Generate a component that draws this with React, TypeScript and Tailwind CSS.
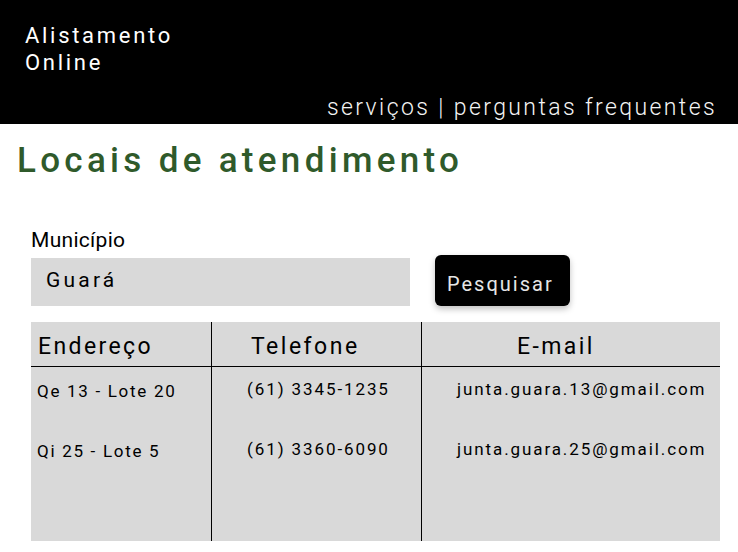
import React from 'react';

const rows = [
  { address: 'Qe 13 - Lote 20', phone: '(61) 3345-1235', email: 'junta.guara.13@gmail.com' },
  { address: 'Qi 25 - Lote 5', phone: '(61) 3360-6090', email: 'junta.guara.25@gmail.com' },
];

export default function App() {
  return (
    <div className="h-[552px] w-[738px] overflow-hidden bg-white font-['Roboto',sans-serif] text-black">
      <header className="flex h-[124px] flex-col bg-black px-[25px] text-white">
        <div className="pt-[22px] text-[22px] leading-[27px] tracking-[2.7px]">
          <p>Alistamento</p>
          <p>Online</p>
        </div>
        <nav className="mt-auto mb-[1px] -mr-[4px] self-end text-[23px] font-light leading-[30px] tracking-[2.4px] text-[#f4f4f4]">
          serviços | perguntas frequentes
        </nav>
      </header>

      <main className="px-[17px]">
        <h1 className="mt-[17px] text-[35px] font-medium leading-[40px] tracking-[4.3px] text-[#2f5a2b]">Locais de atendimento</h1>

        <div className="mt-[46px] pl-[14px]">
          <label className="block text-[21px] leading-[26px] tracking-[0.3px]">Município</label>
          <div className="mt-[5px] flex items-start">
            <div className="h-[48px] w-[379px] bg-[#d9d9d9] pl-[15px] pt-[9px] text-[21px] leading-[26px] tracking-[3.2px]">Guará</div>
            <button
              type="button"
              className="ml-[25px] -mt-[3px] h-[51px] w-[135px] self-start rounded-[6px] bg-black pl-[12px] pt-[7px] text-left text-[20px] leading-[26px] tracking-[2px] text-[#e6e6e6] shadow-[0_3px_6px_rgba(0,0,0,0.25)]"
            >
              Pesquisar
            </button>
          </div>

          <div className="mt-[16px] grid h-[219px] w-[689px] grid-cols-[181px_210px_1fr] grid-rows-[45px_1fr] bg-[#d9d9d9]">
            <div className="border-r-[1.5px] border-b-[1.5px] border-black pl-[7px] pt-[11px] text-[23px] leading-[28px] tracking-[2.4px]">Endereço</div>
            <div className="border-r-[1.5px] border-b-[1.5px] border-black pl-[39px] pt-[11px] text-[23px] leading-[28px] tracking-[2.5px]">Telefone</div>
            <div className="border-b-[1.5px] border-black pl-[95px] pt-[11px] text-[23px] leading-[28px] tracking-[2.4px]">E-mail</div>

            <div className="flex flex-col gap-[39px] border-r-[1.5px] border-black pl-[6px] pt-[14px] text-[17px] leading-[21px] tracking-[1.7px]">
              {rows.map((r) => (
                <p key={r.address}>{r.address}</p>
              ))}
            </div>
            <div className="flex flex-col gap-[39px] border-r-[1.5px] border-black pl-[35px] pt-[12px] text-[17px] leading-[21px] tracking-[1.9px]">
              {rows.map((r) => (
                <p key={r.phone}>{r.phone}</p>
              ))}
            </div>
            <div className="flex flex-col gap-[39px] pl-[35px] pt-[12px] text-[17px] leading-[21px] tracking-[1.9px]">
              {rows.map((r) => (
                <p key={r.email}>{r.email}</p>
              ))}
            </div>
          </div>
        </div>
      </main>
    </div>
  );
}
